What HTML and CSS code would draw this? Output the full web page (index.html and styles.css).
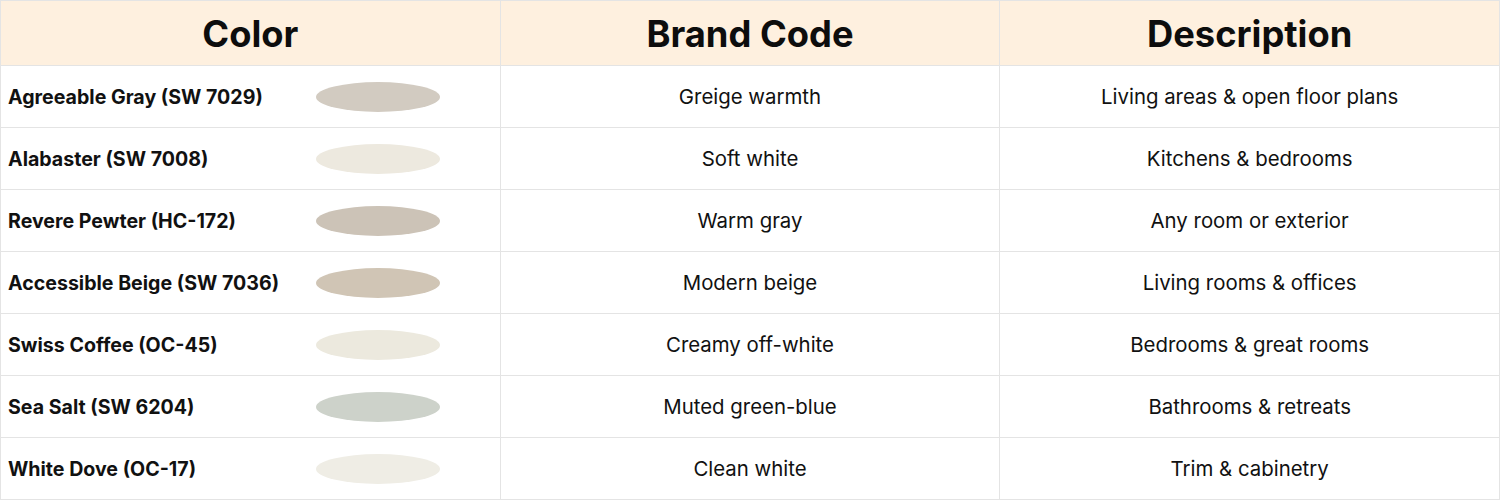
FILE: index.html
```html
<!DOCTYPE html>
<html>
<head>
<meta charset="utf-8">
<link rel="stylesheet" href="styles.css">
</head>
<body>
<table class="paint-table">
  <thead>
    <tr>
      <th>Color</th>
      <th>Brand Code</th>
      <th>Description</th>
    </tr>
  </thead>
  <tbody>
    <tr>
      <td class="name-cell"><div class="name-wrap"><span class="name">Agreeable Gray (SW 7029)</span><span class="swatch" style="background:#d2cbc1"></span></div></td>
      <td>Greige warmth</td>
      <td>Living areas &amp; open floor plans</td>
    </tr>
    <tr>
      <td class="name-cell"><div class="name-wrap"><span class="name">Alabaster (SW 7008)</span><span class="swatch" style="background:#ede9df"></span></div></td>
      <td>Soft white</td>
      <td>Kitchens &amp; bedrooms</td>
    </tr>
    <tr>
      <td class="name-cell"><div class="name-wrap"><span class="name">Revere Pewter (HC-172)</span><span class="swatch" style="background:#ccc3b7"></span></div></td>
      <td>Warm gray</td>
      <td>Any room or exterior</td>
    </tr>
    <tr>
      <td class="name-cell"><div class="name-wrap"><span class="name">Accessible Beige (SW 7036)</span><span class="swatch" style="background:#d0c5b5"></span></div></td>
      <td>Modern beige</td>
      <td>Living rooms &amp; offices</td>
    </tr>
    <tr>
      <td class="name-cell"><div class="name-wrap"><span class="name">Swiss Coffee (OC-45)</span><span class="swatch" style="background:#ece9de"></span></div></td>
      <td>Creamy off-white</td>
      <td>Bedrooms &amp; great rooms</td>
    </tr>
    <tr>
      <td class="name-cell"><div class="name-wrap"><span class="name">Sea Salt (SW 6204)</span><span class="swatch" style="background:#cdd2ca"></span></div></td>
      <td>Muted green-blue</td>
      <td>Bathrooms &amp; retreats</td>
    </tr>
    <tr>
      <td class="name-cell"><div class="name-wrap"><span class="name">White Dove (OC-17)</span><span class="swatch" style="background:#efede5"></span></div></td>
      <td>Clean white</td>
      <td>Trim &amp; cabinetry</td>
    </tr>
  </tbody>
</table>
</body>
</html>
```
FILE: styles.css
```css
html, body {
  margin: 0;
  padding: 0;
  background: #ffffff;
}
.paint-table {
  width: 1500px;
  border-collapse: collapse;
  table-layout: fixed;
  font-family: "Inter", "Noto Sans", sans-serif;
  color: #111111;
}
.paint-table th,
.paint-table td {
  border: 1px solid #e4e4e4;
  padding: 0;
  text-align: center;
  vertical-align: middle;
}
.paint-table th {
  height: 62px;
  padding-top: 2px;
  background: #fef0df;
  font-size: 36.3px;
  font-weight: 700;
  color: #0d0d0d;
}
.paint-table td {
  height: 61px;
  font-size: 20.4px;
  font-weight: 400;
}
.paint-table td.name-cell {
  text-align: left;
}
.name-wrap {
  display: flex;
  align-items: center;
  padding-left: 7px;
}
.name {
  width: 308px;
  font-weight: 700;
  font-size: 19.6px;
}
.swatch {
  display: block;
  width: 124px;
  height: 30px;
  border-radius: 50%;
}
```
